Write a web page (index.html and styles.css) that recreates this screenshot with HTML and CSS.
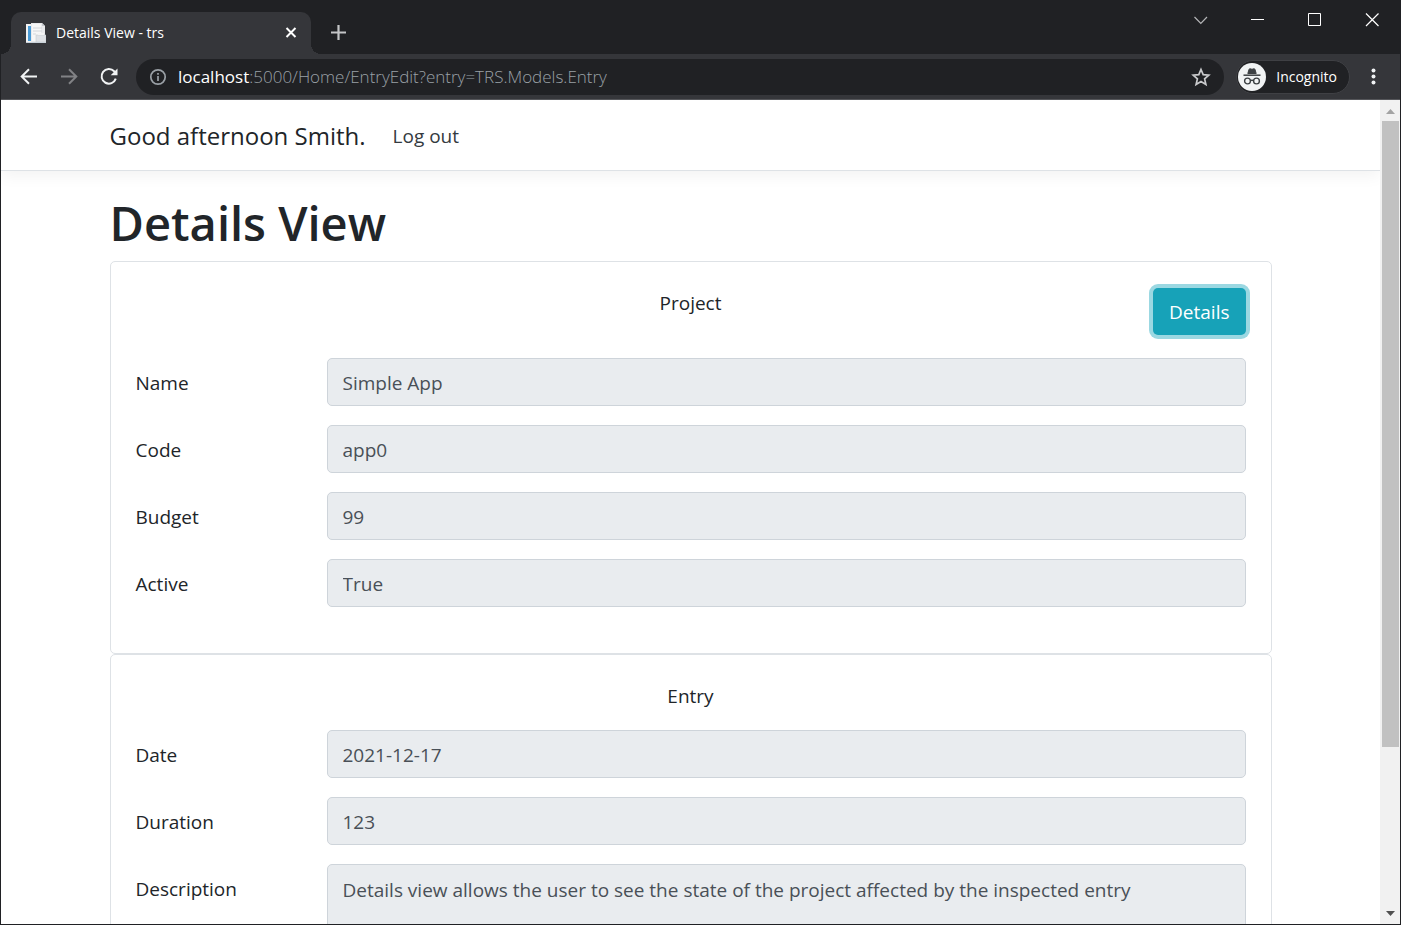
FILE: index.html
```html
<!DOCTYPE html>
<html lang="en">
<head>
<meta charset="utf-8">
<meta name="viewport" content="width=device-width, initial-scale=1">
<title>Details View - trs</title>
<link rel="stylesheet" href="styles.css">
</head>
<body>
<div class="window">
  <div class="tab-strip">
    <div class="tab">
      <svg class="favicon" width="20" height="20" viewBox="0 0 20 20" aria-hidden="true">
        <path d="M0 1h6v18H0z" fill="#f2f2f2"/><path d="M2 3h3v15H2z" fill="#4a9bd6"/>
        <path d="M5 0h11l3 3v16H5z" fill="#e9eaec"/><path d="M6 1h9v17H6z" fill="#f7f7f7"/>
        <path d="M7 5h9M7 8h9M7 11h3" stroke="#d3d6da"/><path d="M16 0v3h3z" fill="#c6c9cd"/>
        <path d="M10 12h10v7H10z" fill="#dfe2e6" stroke="#c7ccd2" stroke-width=".6"/><path d="M12 10h6v2h-6z" fill="#f4f4f4"/><path d="M0 19h20v1H0z" fill="#c9d2d9"/>
      </svg>
      <span class="tab-title">Details View - trs</span>
      <button class="icon-btn" aria-label="Close tab"><svg width="20" height="20" viewBox="0 0 20 20"><path d="M5.500 5l9 9m0-9l-9 9" stroke="#fff" stroke-width="2" fill="none"/></svg></button>
    </div>
    <button class="icon-btn new-tab" aria-label="New tab"><svg width="20" height="20" viewBox="0 0 20 20"><path d="M10.500 3v15M3 10.500h15" stroke="#c4c5c7" stroke-width="2.200" fill="none"/></svg></button>
    <div class="window-controls">
      <button class="icon-btn" aria-label="Search tabs"><svg width="20" height="20" viewBox="0 0 20 20"><path d="M3.500 7l6.300 6.500L16 7" stroke="#b5b6b8" stroke-width="1.200" fill="none"/></svg></button>
      <button class="icon-btn" aria-label="Minimize"><svg width="20" height="20" viewBox="0 0 20 20"><path d="M3 9.500h13" stroke="#fff" fill="none"/></svg></button>
      <button class="icon-btn" aria-label="Maximize"><svg width="20" height="20" viewBox="0 0 20 20"><path d="M3.500 3.500h12v12h-12z" stroke="#fff" fill="none"/></svg></button>
      <button class="icon-btn" aria-label="Close window"><svg width="20" height="20" viewBox="0 0 20 20"><path d="M4 3.500l12.500 12.500m0-12.500L4 16" stroke="#fff" stroke-width="1.200" fill="none"/></svg></button>
    </div>
  </div>

  <div class="toolbar">
    <div class="nav-buttons">
      <button class="icon-btn" aria-label="Back"><svg width="20" height="20" viewBox="0 0 20 20"><path d="M18 9.500H3.500M10 2.200L2.700 9.500l7.300 7.300" stroke="#f1f3f4" stroke-width="2" fill="none"/></svg></button>
      <button class="icon-btn" aria-label="Forward"><svg width="20" height="20" viewBox="0 0 20 20"><path d="M2 9.500h14.500M10 2.200l7.300 7.300-7.300 7.300" stroke="#818285" stroke-width="2" fill="none"/></svg></button>
      <button class="icon-btn" aria-label="Reload"><svg width="20" height="20" viewBox="0 0 20 20"><path d="M16.800 11.700A7.300 7.300 0 1 1 15.200 4.300L17 6.100" stroke="#f1f3f4" stroke-width="2" fill="none"/><path d="M18.500 1.500v6.800h-6.800z" fill="#f1f3f4"/></svg></button>
    </div>
    <div class="address">
      <svg width="18" height="18" viewBox="0 0 18 18" aria-hidden="true"><circle cx="9" cy="9" r="7.200" stroke="#9aa0a6" stroke-width="1.700" fill="none"/><path d="M9 8v5M9 5v1.800" stroke="#9aa0a6" stroke-width="1.700"/></svg>
      <span class="url"><span class="host">localhost</span>:5000/Home/EntryEdit?entry=TRS.Models.Entry</span>
      <button class="icon-btn" aria-label="Bookmark this page"><svg width="20" height="20" viewBox="0 0 20 20"><path d="M10 2.500l2.200 5.200 5.600.5-4.200 3.700 1.300 5.500-4.900-2.900-4.900 2.900 1.300-5.500-4.200-3.700 5.600-.5z" stroke="#c9cacc" stroke-width="1.700" fill="none"/></svg></button>
    </div>
    <button class="profile">
      <svg width="28" height="28" viewBox="0 0 28 28" aria-hidden="true"><circle cx="14" cy="14" r="14" fill="#f1f3f4"/><path d="M5.500 12.200h17" stroke="#3c4043" stroke-width="1.500"/><path d="M9.800 10.500l1.200-4q.3-1 1.300-.7l1.700.5 1.700-.5q1-.3 1.300.7l1.200 4z" fill="#3c4043" stroke="#3c4043"/><circle cx="9.500" cy="18" r="2.900" fill="none" stroke="#3c4043" stroke-width="1.400"/><circle cx="18.500" cy="18" r="2.900" fill="none" stroke="#3c4043" stroke-width="1.400"/><path d="M12.300 17.700q1.700-1 3.400 0" fill="none" stroke="#3c4043" stroke-width="1.400"/></svg>
      <span>Incognito</span>
    </button>
    <button class="icon-btn" aria-label="Menu"><svg width="20" height="20" viewBox="0 0 20 20" fill="#f1f3f4"><circle cx="10.500" cy="3.500" r="2"/><circle cx="10.500" cy="9.500" r="2"/><circle cx="10.500" cy="15.500" r="2"/></svg></button>
  </div>

  <div class="viewport">
    <div class="page">
      <header class="site-header">
        <nav class="container site-nav">
          <a class="brand" href="#">Good afternoon Smith.</a>
          <a class="nav-link" href="#">Log out</a>
        </nav>
      </header>
      <main class="container">
        <h1 class="title">Details View</h1>
        <section class="card">
          <div class="card-head">
            <h2 class="card-title">Project</h2>
            <button class="btn-info">Details</button>
          </div>
          <div class="fields">
            <label class="label" for="name">Name</label><input class="control" id="name" value="Simple App" readonly>
            <label class="label" for="code">Code</label><input class="control" id="code" value="app0" readonly>
            <label class="label" for="budget">Budget</label><input class="control" id="budget" value="99" readonly>
            <label class="label" for="active">Active</label><input class="control" id="active" value="True" readonly>
          </div>
        </section>
        <section class="card">
          <div class="card-head card-head-compact">
            <h2 class="card-title">Entry</h2>
          </div>
          <div class="fields">
            <label class="label" for="date">Date</label><input class="control" id="date" value="2021-12-17" readonly>
            <label class="label" for="duration">Duration</label><input class="control" id="duration" value="123" readonly>
            <label class="label" for="description">Description</label><textarea class="control control-area" id="description" rows="3" readonly>Details view allows the user to see the state of the project affected by the inspected entry</textarea>
          </div>
        </section>
      </main>
    </div>
    <div class="scrollbar" aria-hidden="true">
      <svg class="arrow" width="9" height="5" viewBox="0 0 9 5"><path d="M4.500 0L9 5H0z" fill="#a3a3a3"/></svg>
      <div class="track"><div class="thumb"></div></div>
      <svg class="arrow" width="9" height="5" viewBox="0 0 9 5"><path d="M4.500 5L9 0H0z" fill="#505050"/></svg>
    </div>
  </div>
</div>
</body>
</html>
```
FILE: styles.css
```css
* { box-sizing: border-box; }

body {
  margin: 0;
  font-family: "Open Sans", "Noto Sans", sans-serif;
  font-size: 19px;
  line-height: 30px;
  color: #212529;
  background: #fff;
}

button { font: inherit; cursor: pointer; }

.window {
  display: flex;
  flex-direction: column;
  height: 100vh;
  overflow: hidden;
  border: 1px solid #202124;
}

.icon-btn {
  display: flex;
  padding: 0;
  border: 0;
  background: none;
}

/* Browser chrome */
.tab-strip {
  display: flex;
  flex: none;
  align-items: flex-end;
  height: 53px;
  padding-left: 10px;
  background: #202124;
}

.tab {
  position: relative;
  display: flex;
  align-items: center;
  gap: 10px;
  width: 300px;
  height: 42px;
  padding: 0 10px 0 15px;
  border-radius: 10px 10px 0 0;
  background: #35363a;
  color: #fff;
  font-size: 14px;
}

.tab::before,
.tab::after {
  content: "";
  position: absolute;
  bottom: 0;
  width: 10px;
  height: 10px;
}

.tab::before {
  left: -10px;
  background: radial-gradient(circle at 0 0, #202124 10px, #35363a 10px);
}

.tab::after {
  right: -10px;
  background: radial-gradient(circle at 100% 0, #202124 10px, #35363a 10px);
}

.tab-title { flex: 1; }

.new-tab { margin: 0 0 12px 17px; }

.window-controls {
  display: flex;
  gap: 37px;
  align-self: flex-start;
  margin-left: auto;
  padding: 9px 18px 0 0;
}

.toolbar {
  display: flex;
  flex: none;
  align-items: center;
  gap: 12px;
  height: 46px;
  padding: 0 17px 0 18px;
  border-bottom: 1px solid #55565a;
  background: #35363a;
}

.nav-buttons {
  display: flex;
  gap: 20px;
  padding-right: 5px;
}

.address {
  display: flex;
  flex: 1;
  align-items: center;
  gap: 11px;
  height: 36px;
  padding: 0 13px;
  border-radius: 18px;
  background: #202124;
  color: #9aa0a6;
  font-size: 17px;
}

.url {
  flex: 1;
  overflow: hidden;
  font-weight: 300;
  white-space: nowrap;
}

.host {
  color: #fff;
  font-weight: 400;
}

.profile {
  display: flex;
  align-items: center;
  gap: 10px;
  height: 34px;
  padding: 0 12px 0 1px;
  border: 1px solid #3f4044;
  border-radius: 17px;
  background: #202124;
  color: #fff;
  font-size: 14px;
}

.profile + .icon-btn { margin-left: 1px; }

/* Page */
.viewport {
  display: flex;
  flex: 1;
  min-height: 0;
}

.page {
  flex: 1;
  overflow: hidden;
}

.container {
  max-width: 1200px;
  margin: 0 auto;
  padding: 0 19px;
}

.site-header {
  padding: 10px 0;
  border-bottom: 1px solid #dee2e6;
  box-shadow: 0 5px 15px rgba(0, 0, 0, .05);
}

.site-nav {
  display: flex;
  align-items: center;
  gap: 27px;
  height: 50px;
  padding-top: 2px;
}

.brand {
  color: #212529;
  font-size: 24px;
  text-decoration: none;
}

.nav-link {
  color: #343a40;
  text-decoration: none;
}

.title {
  margin: 22px 0 8px;
  font-size: 47px;
  font-weight: 600;
  line-height: 60px;
}

.card {
  padding: 26px 25px 46px;
  border: 1px solid #dee2e6;
  border-radius: 5px;
}

.card-head {
  display: grid;
  grid-template-columns: 1fr auto 1fr;
  align-items: start;
  height: 70px;
}

.card-head-compact { height: 49px; }

.card-title {
  grid-column: 2;
  margin: 0;
  font-size: 19px;
  font-weight: 400;
  line-height: 30px;
}

.btn-info {
  justify-self: end;
  height: 47px;
  padding: 0 16px;
  border: 0;
  border-radius: 5px;
  background: #17a2b8;
  color: #fff;
  box-shadow: 0 0 0 4px #9bd8e2;
}

.fields {
  display: grid;
  grid-template-columns: 191px 1fr;
  row-gap: 19px;
}

.label { padding-top: 10px; }

.control {
  width: 100%;
  height: 48px;
  padding: 2px 15px 0;
  border: 1px solid #ced4da;
  border-radius: 5px;
  background: #e9ecef;
  color: #495057;
  font: inherit;
  outline: 0;
}

.control-area {
  height: 110px;
  padding: 10px 15px;
  resize: none;
}

.scrollbar {
  display: flex;
  flex: none;
  flex-direction: column;
  align-items: center;
  gap: 7px;
  width: 20px;
  padding: 9px 1px 8px 2px;
  background: #f1f1f1;
}

.arrow { flex: none; }

.track {
  flex: 1;
  width: 100%;
}

.thumb {
  height: 80%;
  background: #c1c1c1;
}
```
